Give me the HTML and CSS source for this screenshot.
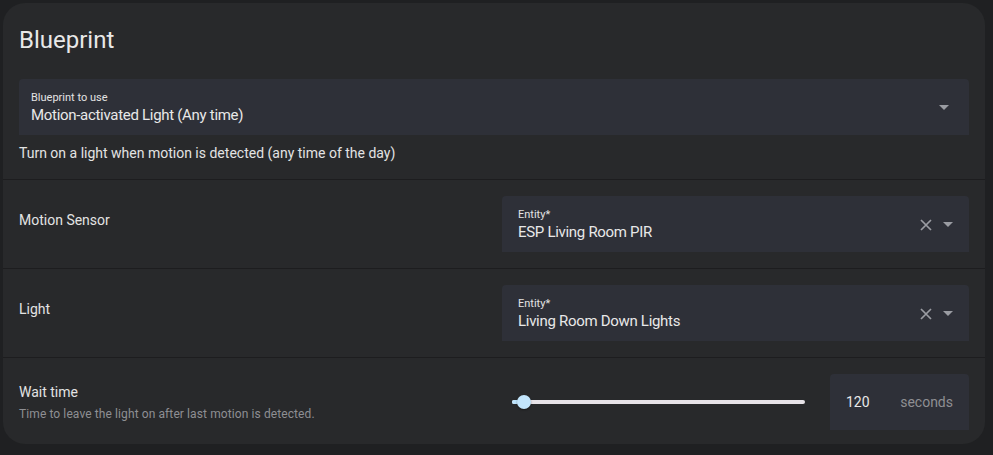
FILE: index.html
```html
<!DOCTYPE html>
<html>
<head>
<meta charset="utf-8">
<link rel="stylesheet" href="styles.css">
</head>
<body>
<div class="card">
  <div class="header">Blueprint</div>
  <div class="intro">
    <div class="select">
      <div class="field-text">
        <div class="field-label">Blueprint to use</div>
        <div class="field-value">Motion-activated Light (Any time)</div>
      </div>
      <svg class="caret" width="10" height="5" viewBox="0 0 10 5"><path d="M0 0h10L5 5z" fill="#9a9ca2"/></svg>
    </div>
    <div class="intro-desc">Turn on a light when motion is detected (any time of the day)</div>
  </div>

  <div class="row">
    <div class="row-info">
      <div class="row-title">Motion Sensor</div>
      <div class="row-desc"></div>
    </div>
    <div class="row-control">
      <div class="combo">
        <div class="field-text">
          <div class="field-label">Entity*</div>
          <div class="field-value">ESP Living Room PIR</div>
        </div>
        <svg class="clear" width="12" height="12" viewBox="0 0 12 12"><path d="M1 1L11 11M11 1L1 11" stroke="#9a9ca2" stroke-width="1.7"/></svg>
        <svg class="caret" width="10" height="5" viewBox="0 0 10 5"><path d="M0 0h10L5 5z" fill="#9a9ca2"/></svg>
      </div>
    </div>
  </div>

  <div class="row">
    <div class="row-info">
      <div class="row-title">Light</div>
      <div class="row-desc"></div>
    </div>
    <div class="row-control">
      <div class="combo">
        <div class="field-text">
          <div class="field-label">Entity*</div>
          <div class="field-value">Living Room Down Lights</div>
        </div>
        <svg class="clear" width="12" height="12" viewBox="0 0 12 12"><path d="M1 1L11 11M11 1L1 11" stroke="#9a9ca2" stroke-width="1.7"/></svg>
        <svg class="caret" width="10" height="5" viewBox="0 0 10 5"><path d="M0 0h10L5 5z" fill="#9a9ca2"/></svg>
      </div>
    </div>
  </div>

  <div class="row last">
    <div class="row-info">
      <div class="row-title">Wait time</div>
      <div class="row-desc">Time to leave the light on after last motion is detected.</div>
    </div>
    <div class="row-control">
      <div class="slider-wrap">
        <div class="slider">
          <div class="track"><div class="track-active" style="width: 4%"></div></div>
          <div class="thumb" style="left: 4%"></div>
        </div>
        <div class="number">
          <span class="num">120</span>
          <span class="unit">seconds</span>
        </div>
      </div>
    </div>
  </div>
</div>
</body>
</html>
```

FILE: styles.css
```css
html, body {
  margin: 0;
  padding: 0;
  background: #1f2022;
}
body {
  padding: 3px 8px 10px 3px;
  font-family: Roboto, "Noto Sans", sans-serif;
  color: #e3e3e3;
}
.card {
  background: #28292b;
  border-radius: 22px;
  width: 982px;
  box-sizing: border-box;
  overflow: hidden;
}
.header {
  font-size: 24px;
  line-height: 32px;
  padding: 21px 16px 0 16px;
  color: #e8e8e8;
}
.intro {
  padding: 23px 16px 16px 16px;
  border-bottom: 1px solid #1d1d1f;
}
.select {
  height: 56px;
  background: #2e3038;
  border-radius: 4px 4px 0 0;
  display: flex;
  align-items: center;
  padding: 0 20px 0 12px;
  box-sizing: border-box;
}
.field-text {
  flex: 1;
  display: flex;
  flex-direction: column;
  padding-top: 2px;
}
.field-label {
  font-size: 11px;
  line-height: 14px;
  color: #e3e3e3;
}
.field-value {
  font-size: 15px;
  line-height: 20px;
  letter-spacing: -0.3px;
  color: #e8e8e8;
}
.intro-desc {
  margin-top: 8px;
  font-size: 14px;
  line-height: 20px;
  color: #e3e3e3;
}
.row {
  display: flex;
  gap: 16px;
  padding: 16px;
  border-bottom: 1px solid #1d1d1f;
  align-items: center;
}
.row.last {
  border-bottom: none;
  padding-bottom: 14px;
}
.row-info {
  flex: 1;
  display: flex;
  flex-direction: column;
}
.row-title {
  font-size: 14px;
  line-height: 20px;
  color: #e3e3e3;
}
.row-desc {
  font-size: 12px;
  line-height: 16px;
  letter-spacing: 0.1px;
  color: #8e8f93;
  min-height: 4px;
  margin-top: 4px;
}
.row-control {
  flex: 1;
}
.combo {
  height: 56px;
  background: #2e3038;
  border-radius: 4px 4px 0 0;
  display: flex;
  align-items: center;
  padding: 0 16px 0 16px;
  box-sizing: border-box;
}
.combo .clear {
  margin-right: 11px;
  margin-top: 2px;
}
.slider-wrap {
  display: flex;
  gap: 16px;
  align-items: center;
}
.slider {
  flex: 1;
  position: relative;
  height: 56px;
  margin: 0 9px 0 10px;
}
.track {
  position: absolute;
  left: 0;
  right: 0;
  top: 26px;
  height: 4px;
  border-radius: 2px;
  background: #e7e3e8;
  overflow: hidden;
}
.track-active {
  height: 100%;
  background: #bde3fb;
}
.thumb {
  position: absolute;
  top: 21px;
  width: 14px;
  height: 14px;
  margin-left: -7px;
  border-radius: 50%;
  background: #c2e5fc;
  box-shadow: 0 1px 2px rgba(0,0,0,0.4);
}
.number {
  width: 139px;
  height: 56px;
  background: #2e3038;
  border-radius: 4px 4px 0 0;
  display: flex;
  align-items: center;
  padding: 0 16px;
  box-sizing: border-box;
  justify-content: space-between;
  font-size: 14px;
}
.num {
  color: #e8e8e8;
}
.unit {
  color: #8e8f93;
}
```
